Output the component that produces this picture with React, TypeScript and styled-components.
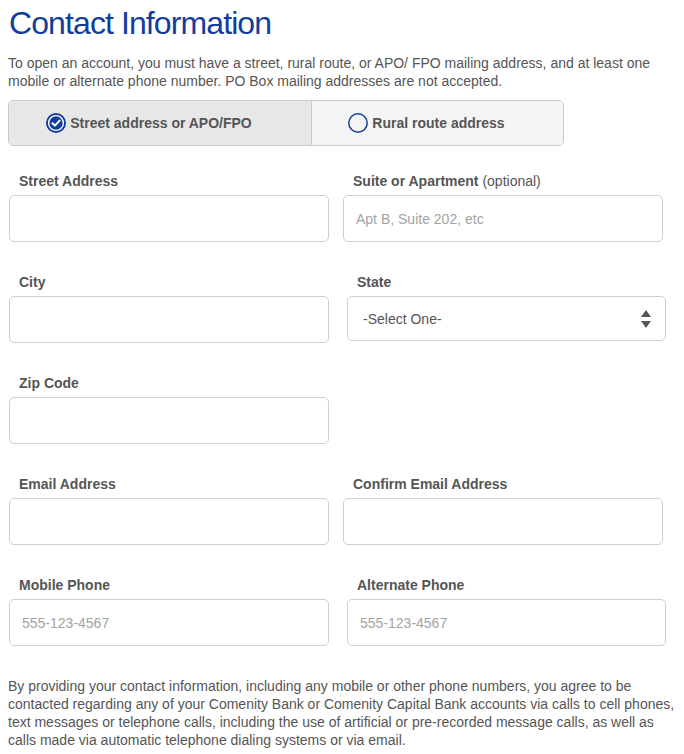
import React from 'react';
import styled, { createGlobalStyle } from 'styled-components';

const GlobalStyle = createGlobalStyle`
  html, body {
    margin: 0;
    padding: 0;
    background: #ffffff;
  }
  body {
    font-family: 'Liberation Sans', Arial, Helvetica, sans-serif;
    color: #555555;
  }
`;

const Page = styled.div`
  width: 684px;
  height: 754px;
  box-sizing: border-box;
  padding: 4px 8px 0 8px;
  overflow: hidden;
`;

const Title = styled.h1`
  margin: 0;
  font-size: 32px;
  line-height: 38px;
  font-weight: 400;
  letter-spacing: -0.9px;
  color: #123d9e;
  padding-left: 1px;
`;

const Intro = styled.p`
  margin: 12px 0 0 0;
  font-size: 14px;
  line-height: 18px;
  color: #555555;
`;

const Toggle = styled.div`
  margin-top: 10px;
  width: 556px;
  height: 46px;
  box-sizing: border-box;
  display: flex;
  border: 1px solid #c9c9c9;
  border-radius: 5px;
  overflow: hidden;
`;

const ToggleOption = styled.div<{ $active?: boolean; $width: number }>`
  width: ${(p) => p.$width}px;
  box-sizing: border-box;
  padding-right: 22px;
  display: flex;
  align-items: center;
  justify-content: center;
  gap: 4px;
  background: ${(p) => (p.$active ? '#e7e7e7' : '#f5f5f5')};
  font-size: 14px;
  font-weight: 700;
  color: #555555;
  & + & {
    border-left: 1px solid #c9c9c9;
  }
`;

const Fields = styled.div`
  margin-top: 26px;
  display: grid;
  grid-template-columns: 320px 320px;
  column-gap: 14px;
  row-gap: 31px;
  padding-left: 1px;
`;

const Field = styled.div<{ $shift?: number; $narrow?: boolean }>`
  display: flex;
  flex-direction: column;
  margin-left: ${(p) => p.$shift ?? 0}px;
  width: ${(p) => (p.$narrow ? 319 : 320)}px;
`;

const Label = styled.label`
  display: block;
  height: 17px;
  line-height: 17px;
  padding-top: 1px;
  margin: 0 0 5px 10px;
  font-size: 14px;
  font-weight: 700;
  color: #555555;
`;

const Optional = styled.span`
  font-weight: 400;
`;

const TextInput = styled.input`
  box-sizing: border-box;
  width: 100%;
  height: 47px;
  margin: 0;
  padding: 0 12px;
  border: 1px solid #cfcfcf;
  border-radius: 5px;
  background: #ffffff;
  font-family: 'Liberation Sans', Arial, Helvetica, sans-serif;
  font-size: 14px;
  color: #555555;
  outline: none;
  &::placeholder {
    color: #a3a3a3;
  }
`;

const SelectBox = styled.div`
  box-sizing: border-box;
  height: 45px;
  margin-bottom: 2px;
  padding: 0 14px 0 15px;
  display: flex;
  align-items: center;
  justify-content: space-between;
  border: 1px solid #cfcfcf;
  border-radius: 5px;
  background: #ffffff;
  font-size: 14px;
  color: #555555;
`;

const Notice = styled.p`
  margin: 31px 0 0 0;
  font-size: 14px;
  line-height: 18px;
  color: #555555;
`;

const CheckedIcon = () => (
  <svg width="20" height="20" viewBox="0 0 20 20">
    <circle cx="10" cy="10" r="10" fill="#123d9e" />
    <circle cx="10" cy="10" r="7.4" fill="none" stroke="#ffffff" strokeWidth="1.4" />
    <path
      d="M6.4 10.2 L8.9 12.6 L13.6 7.6"
      fill="none"
      stroke="#ffffff"
      strokeWidth="2"
      strokeLinecap="round"
      strokeLinejoin="round"
    />
  </svg>
);

const EmptyIcon = () => (
  <svg width="20" height="20" viewBox="0 0 20 20">
    <circle cx="10" cy="10" r="9.2" fill="none" stroke="#123d9e" strokeWidth="1.5" />
  </svg>
);

const SelectArrows = () => (
  <svg width="10" height="20" viewBox="0 0 10 20">
    <path d="M5 1 L10 8 L0 8 Z" fill="#555555" />
    <path d="M0 12 L10 12 L5 19 Z" fill="#555555" />
  </svg>
);

export default function App() {
  return (
    <Page>
      <GlobalStyle />
      <Title>Contact Information</Title>
      <Intro>
        To open an account, you must have a street, rural route, or APO/ FPO mailing address, and at least one
        mobile or alternate phone number. PO Box mailing addresses are not accepted.
      </Intro>

      <Toggle>
        <ToggleOption $active $width={302}>
          <CheckedIcon />
          Street address or APO/FPO
        </ToggleOption>
        <ToggleOption $width={252}>
          <EmptyIcon />
          Rural route address
        </ToggleOption>
      </Toggle>

      <Fields>
        <Field>
          <Label>Street Address</Label>
          <TextInput />
        </Field>
        <Field>
          <Label>
            Suite or Apartment <Optional>(optional)</Optional>
          </Label>
          <TextInput placeholder="Apt B, Suite 202, etc" />
        </Field>

        <Field>
          <Label>City</Label>
          <TextInput />
        </Field>
        <Field $shift={4} $narrow>
          <Label>State</Label>
          <SelectBox>
            -Select One-
            <SelectArrows />
          </SelectBox>
        </Field>

        <Field>
          <Label>Zip Code</Label>
          <TextInput />
        </Field>
        <div />

        <Field>
          <Label>Email Address</Label>
          <TextInput />
        </Field>
        <Field>
          <Label>Confirm Email Address</Label>
          <TextInput />
        </Field>

        <Field>
          <Label>Mobile Phone</Label>
          <TextInput placeholder="555-123-4567" />
        </Field>
        <Field $shift={4} $narrow>
          <Label>Alternate Phone</Label>
          <TextInput placeholder="555-123-4567" />
        </Field>
      </Fields>

      <Notice>
        By providing your contact information, including any mobile or other phone numbers, you agree to be
        contacted regarding any of your Comenity Bank or Comenity Capital Bank accounts via calls to cell phones,
        text messages or telephone calls, including the use of artificial or pre-recorded message calls, as well as
        calls made via automatic telephone dialing systems or via email.
      </Notice>
    </Page>
  );
}
